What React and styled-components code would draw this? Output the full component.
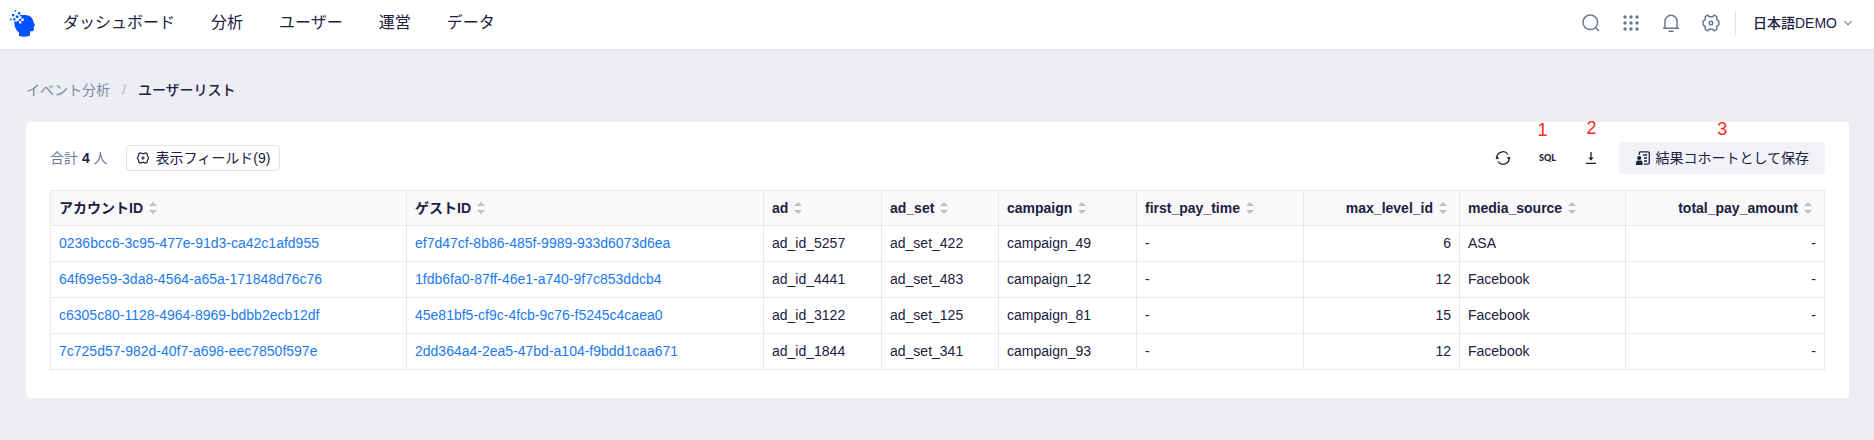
import React from 'react';
import styled, { createGlobalStyle } from 'styled-components';

const GlobalStyle = createGlobalStyle`
	* {
		box-sizing: border-box;
	}
	body {
		margin: 0;
		min-height: 100vh;
		background: #edeef4;
		color: #202040;
		font-family: 'Liberation Sans', 'Noto Sans CJK JP', sans-serif;
		font-size: 14px;
		line-height: 20px;
	}
	button {
		font: inherit;
		color: inherit;
		cursor: pointer;
	}
	svg {
		display: block;
		flex: none;
	}
`;

const Header = styled.header`
	display: flex;
	align-items: center;
	height: 50px;
	padding: 0 21px 4px 8px;
	background: #ffffff;
	border-bottom: 1px solid #e0e1ea;
`;

const HomeLink = styled.a`
	display: flex;
	margin-right: 27px;
`;

const Nav = styled.nav`
	display: flex;
	gap: 36px;
	font-size: 16px;
`;

const NavLink = styled.a`
	color: inherit;
	text-decoration: none;
	white-space: nowrap;
`;

const HeaderTools = styled.div`
	display: flex;
	align-items: center;
	gap: 20px;
	margin-left: auto;
	color: #6b7796;
`;

const IconButton = styled.button`
	position: relative;
	display: flex;
	align-items: center;
	justify-content: center;
	width: 20px;
	height: 20px;
	padding: 0;
	border: 0;
	background: none;
`;

const AccountButton = styled.button`
	display: flex;
	align-items: center;
	gap: 6px;
	height: 24px;
	margin-left: -6px;
	padding: 0 0 0 17px;
	border: 0;
	border-left: 1px solid #e0e1ea;
	background: none;
	color: #202040;
	font-weight: 500;
	white-space: nowrap;
`;

const Main = styled.main`
	padding: 30px 25px 42px 26px;
`;

const Breadcrumb = styled.nav`
	display: flex;
	gap: 12px;
	margin-bottom: 22px;
`;

const Crumb = styled.a`
	color: #80889f;
	text-decoration: none;
`;

const Separator = styled.span`
	color: #b6b9c9;
`;

const CurrentCrumb = styled.span`
	color: #202040;
	font-weight: 500;
`;

const Card = styled.section`
	padding: 20px 24px 28px;
	border-radius: 4px;
	background: #ffffff;
`;

const Toolbar = styled.div`
	display: flex;
	align-items: center;
	margin-bottom: 16px;
`;

const Total = styled.p`
	margin: 0 18px 0 0;
	color: #6b7796;
`;

const Count = styled.strong`
	color: #202040;
	font-weight: 700;
`;

const FieldsButton = styled.button`
	display: flex;
	align-items: center;
	gap: 6px;
	height: 26px;
	padding: 0 9px;
	border: 1px solid #e0e1ea;
	border-radius: 4px;
	background: #ffffff;
	white-space: nowrap;
`;

const Actions = styled.div`
	display: flex;
	align-items: center;
	gap: 24px;
	margin-left: auto;
`;

const SqlLabel = styled.span`
	font-family: Lato, sans-serif;
	font-size: 9px;
	font-weight: 900;
	line-height: 12px;
`;

const SaveButton = styled.button`
	position: relative;
	display: flex;
	align-items: center;
	gap: 4px;
	height: 32px;
	margin-left: -6px;
	padding: 0 16px;
	border: 0;
	border-radius: 4px;
	background: #f1f2f8;
	white-space: nowrap;
`;

// red step number floating above a control
const StepMark = styled.span`
	position: absolute;
	left: 0;
	right: 0;
	bottom: 100%;
	margin-bottom: ${(props) => props.$lift}px;
	color: #ff2a1a;
	font-size: 18px;
	line-height: 20px;
	text-align: ${(props) => props.$align || 'center'};
`;

const Table = styled.table`
	width: 100%;
	table-layout: fixed;
	border-collapse: collapse;
`;

const Column = styled.col`
	width: ${(props) => (props.$width ? `${props.$width}px` : 'auto')};
`;

const HeadCell = styled.th`
	height: 35px;
	padding: 0 8px;
	border: 1px solid #e8e9ef;
	background: #f9f9fc;
	font-weight: 700;
	text-align: left;
`;

const SortButton = styled.button`
	display: flex;
	align-items: center;
	justify-content: ${(props) => (props.$numeric ? 'flex-end' : 'flex-start')};
	gap: 6px;
	width: 100%;
	padding: ${(props) => (props.$numeric ? '0 4px 0 0' : '0')};
	border: 0;
	background: none;
	white-space: nowrap;
`;

const Cell = styled.td`
	height: 36px;
	padding: 0 8px 2px;
	border: 1px solid #e8e9ef;
	text-align: ${(props) => (props.$numeric ? 'right' : 'left')};
	white-space: nowrap;
`;

const IdLink = styled.a`
	color: #1a7af0;
	text-decoration: none;
`;

const Logo = () => (
	<svg width="28" height="28" viewBox="0 0 28 28" fill="#0052ff">
		<path d="M12 6H17C22 6 25 9 25.5 13L27 16.5 25.8 17.4V20.5C25.8 22 25 22.5 23.5 22.3L22 22.3V26.5Q17 28.6 11 27V23.5C8 21.5 6.4 18 6.4 14V12.5H9V10H12Z" />
		<path fill="#ffffff" d="M11 7.2h2.4v2.4H11zM13.3 9.6h2.4V12h-2.4zM8.6 9.6H11V12H8.6zM11 12h2.4v2.4H11z" />
		<path d="M6.7 1.2h1.5v1.5H6.7zM10 3.2h2.4v2.4H10zM4 5h2.2v2.2H4zM7.8 6.5h2.6v2.6H7.8zM2 9.6h1.6v1.6H2zM5.2 9.2h2.2v2.2H5.2z" />
	</svg>
);

const SearchIcon = () => (
	<svg width="20" height="20" viewBox="0 0 20 20" fill="none" stroke="currentColor" strokeWidth="1.5">
		<circle cx="9.3" cy="9.3" r="7.3" />
		<path d="M14.5 14.5L18 18" />
	</svg>
);

const AppsIcon = () => (
	<svg width="20" height="20" viewBox="0 0 20 20" fill="currentColor">
		{[4, 10, 16].map((y) => [4, 10, 16].map((x) => <circle key={`${x}-${y}`} cx={x} cy={y} r="1.7" />))}
	</svg>
);

const BellIcon = () => (
	<svg width="20" height="20" viewBox="0 0 20 20" fill="none" stroke="currentColor" strokeWidth="1.5">
		<path d="M4 15V8.2a6 6 0 0 1 12 0V15M2 15.2h16M7.5 18.3h5" />
	</svg>
);

const GearIcon = () => (
	<svg width="20" height="20" viewBox="0 0 20 20" fill="none" stroke="currentColor" strokeWidth="1.5" strokeLinejoin="round">
		<path d="M6.6 2.2L8.6 3.8H11.4L13.4 2.2 15.8 3.6 15.6 6.4 17.9 8.4V11.6L15.6 13.6 15.8 16.4 13.4 17.8 11.4 16.2H8.6L6.6 17.8 4.2 16.4 4.4 13.6 2.1 11.6V8.4L4.4 6.4 4.2 3.6Z" />
		<circle cx="10" cy="10" r="1.8" />
	</svg>
);

const FieldsIcon = () => (
	<svg width="14" height="14" viewBox="0 0 14 14" fill="none" stroke="currentColor" strokeWidth="1.2" strokeLinejoin="round">
		<path d="M4.2 1.8L6 2.6H8L9.8 1.8 11.3 2.9 11.4 4.8 12.7 7 11.4 9.2 11.3 11.1 9.8 12.2 8 11.4H6L4.2 12.2 2.7 11.1 2.6 9.2 1.3 7 2.6 4.8 2.7 2.9Z" />
		<path d="M7 5.2V8.8M5.2 7H8.8" />
	</svg>
);

const ChevronIcon = () => (
	<svg width="10" height="10" viewBox="0 0 10 10" fill="none" stroke="#6b7796" strokeWidth="1.1">
		<path d="M1.5 3.2L5 6.8 8.5 3.2" />
	</svg>
);

const RefreshIcon = () => (
	<svg width="16" height="16" viewBox="0 0 16 16" fill="none" stroke="currentColor" strokeWidth="1.3">
		<path d="M2 9.2A6.1 6.1 0 0 1 13 4.5M14 6.8A6.1 6.1 0 0 1 3 11.5" />
		<path fill="currentColor" stroke="none" d="M0.4 9L2 6.2 4.4 8.4ZM11.6 7.6L14 9.8 15.6 7Z" />
	</svg>
);

const DownloadIcon = () => (
	<svg width="14" height="14" viewBox="0 0 14 14" fill="none" stroke="currentColor" strokeWidth="1.3">
		<path d="M7 1V9M2 12.4H12" />
		<path fill="currentColor" stroke="none" d="M4.4 6.6H9.6L7 9.6Z" />
	</svg>
);

const CohortIcon = () => (
	<svg width="16" height="16" viewBox="0 0 16 16" fill="none" stroke="currentColor" strokeWidth="1.3">
		<path d="M4.2 5V3.2Q4.2 1.8 5.6 1.8H12.9Q14.3 1.8 14.3 3.2V12.8Q14.3 14.2 12.9 14.2H9M8 5H12M9 8H12M9 11H12" />
		<circle cx="4.2" cy="8" r="2.1" fill="currentColor" stroke="none" />
		<path fill="currentColor" stroke="none" d="M1 15V12.8Q1 10.6 3 10.6H5.6Q7.6 10.6 7.6 12.8V15Z" />
	</svg>
);

const SortIcon = () => (
	<svg width="8" height="14" viewBox="0 0 8 14" fill="#bfbfbf">
		<path d="M4 1L8 5H0ZM4 13L0 9H8Z" />
	</svg>
);

const menu = ['ダッシュボード', '分析', 'ユーザー', '運営', 'データ'];

const columns = [
	{ key: 'account', label: 'アカウントID', width: 356, link: true },
	{ key: 'guest', label: 'ゲストID', link: true },
	{ key: 'ad', label: 'ad', width: 118 },
	{ key: 'adSet', label: 'ad_set', width: 117 },
	{ key: 'campaign', label: 'campaign', width: 138 },
	{ key: 'firstPay', label: 'first_pay_time', width: 167 },
	{ key: 'maxLevel', label: 'max_level_id', width: 156, numeric: true },
	{ key: 'source', label: 'media_source', width: 166 },
	{ key: 'totalPay', label: 'total_pay_amount', width: 199, numeric: true }
];

const users = [
	{
		account: '0236bcc6-3c95-477e-91d3-ca42c1afd955',
		guest: 'ef7d47cf-8b86-485f-9989-933d6073d6ea',
		ad: 'ad_id_5257',
		adSet: 'ad_set_422',
		campaign: 'campaign_49',
		maxLevel: 6,
		source: 'ASA'
	},
	{
		account: '64f69e59-3da8-4564-a65a-171848d76c76',
		guest: '1fdb6fa0-87ff-46e1-a740-9f7c853ddcb4',
		ad: 'ad_id_4441',
		adSet: 'ad_set_483',
		campaign: 'campaign_12',
		maxLevel: 12,
		source: 'Facebook'
	},
	{
		account: 'c6305c80-1128-4964-8969-bdbb2ecb12df',
		guest: '45e81bf5-cf9c-4fcb-9c76-f5245c4caea0',
		ad: 'ad_id_3122',
		adSet: 'ad_set_125',
		campaign: 'campaign_81',
		maxLevel: 15,
		source: 'Facebook'
	},
	{
		account: '7c725d57-982d-40f7-a698-eec7850f597e',
		guest: '2dd364a4-2ea5-47bd-a104-f9bdd1caa671',
		ad: 'ad_id_1844',
		adSet: 'ad_set_341',
		campaign: 'campaign_93',
		maxLevel: 12,
		source: 'Facebook'
	}
];

const UserTable = () => (
	<Table>
		<colgroup>
			{columns.map((column) => <Column key={column.key} $width={column.width} />)}
		</colgroup>
		<thead>
			<tr>
				{columns.map((column) => (
					<HeadCell key={column.key} scope="col">
						<SortButton $numeric={column.numeric}>
							{column.label}
							<SortIcon />
						</SortButton>
					</HeadCell>
				))}
			</tr>
		</thead>
		<tbody>
			{users.map((user) => (
				<tr key={user.account}>
					{columns.map((column) => (
						<Cell key={column.key} $numeric={column.numeric}>
							{column.link ? <IdLink href="#">{user[column.key]}</IdLink> : user[column.key] || '-'}
						</Cell>
					))}
				</tr>
			))}
		</tbody>
	</Table>
);

const App = () => (
	<>
		<GlobalStyle />
		<Header>
			<HomeLink href="#" aria-label="ホーム">
				<Logo />
			</HomeLink>
			<Nav>
				{menu.map((item) => (
					<NavLink key={item} href="#">{item}</NavLink>
				))}
			</Nav>
			<HeaderTools>
				<IconButton aria-label="検索"><SearchIcon /></IconButton>
				<IconButton aria-label="アプリ"><AppsIcon /></IconButton>
				<IconButton aria-label="通知"><BellIcon /></IconButton>
				<IconButton aria-label="設定"><GearIcon /></IconButton>
				<AccountButton>
					日本語DEMO
					<ChevronIcon />
				</AccountButton>
			</HeaderTools>
		</Header>
		<Main>
			<Breadcrumb>
				<Crumb href="#">イベント分析</Crumb>
				<Separator>/</Separator>
				<CurrentCrumb>ユーザーリスト</CurrentCrumb>
			</Breadcrumb>
			<Card>
				<Toolbar>
					<Total>合計 <Count>4</Count> 人</Total>
					<FieldsButton>
						<FieldsIcon />
						表示フィールド(9)
					</FieldsButton>
					<Actions>
						<IconButton aria-label="更新"><RefreshIcon /></IconButton>
						<IconButton>
							<StepMark $lift={8} $align="left">1</StepMark>
							<SqlLabel>SQL</SqlLabel>
						</IconButton>
						<IconButton aria-label="ダウンロード">
							<StepMark $lift={10}>2</StepMark>
							<DownloadIcon />
						</IconButton>
						<SaveButton>
							<StepMark $lift={3}>3</StepMark>
							<CohortIcon />
							結果コホートとして保存
						</SaveButton>
					</Actions>
				</Toolbar>
				<UserTable />
			</Card>
		</Main>
	</>
);

export default App;
